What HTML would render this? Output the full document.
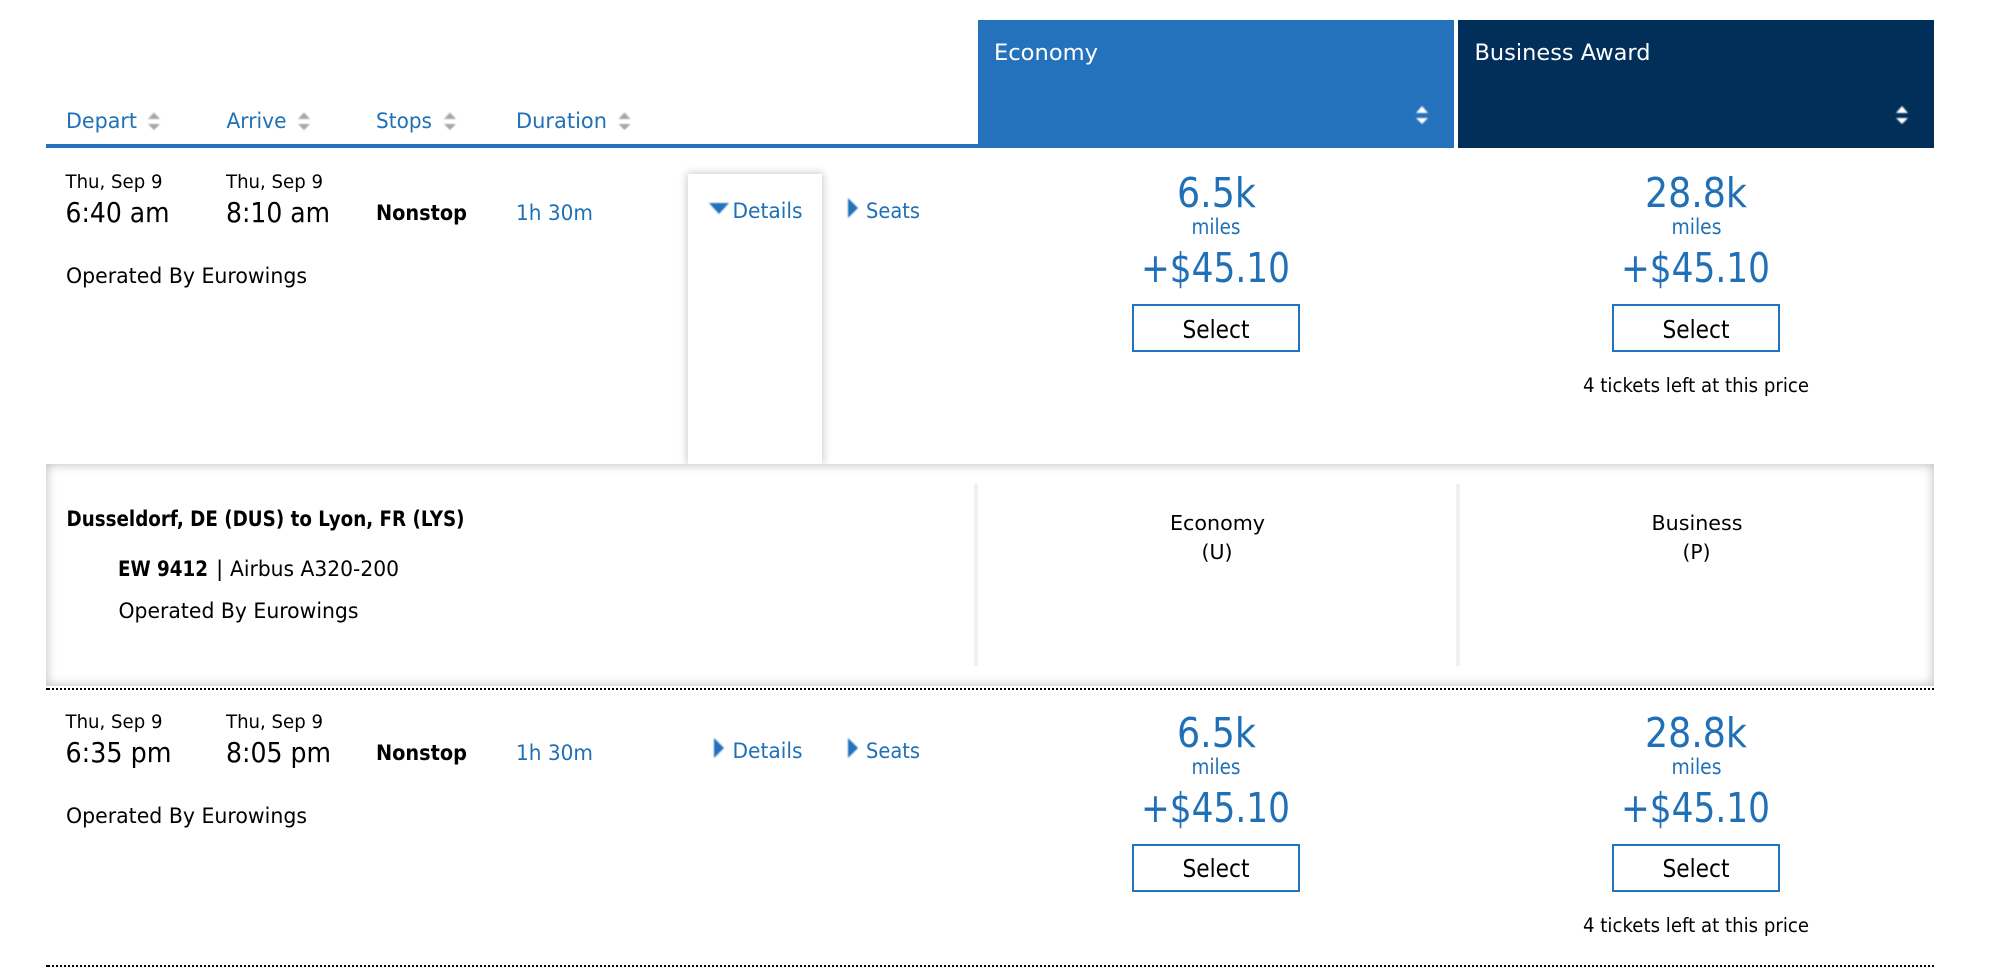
<!DOCTYPE html>
<html lang="en">
<head>
<meta charset="utf-8">
<title>Flight results</title>
<style>
html,body{margin:0;padding:0;background:#fff;width:1998px;height:968px;overflow:hidden}
#a{position:absolute;left:0;top:0;width:1998px;height:968px}
.box{position:absolute}
.panel{left:46px;top:464px;width:1888px;height:222px;box-shadow:inset 0 0 11px 0 #b8b8b8;background:#fff}
.tab{left:688px;top:174px;width:134px;height:290px;background:#fff;box-shadow:0 0 8px 1px #cacaca}
svg{position:absolute;left:0;top:0}
text{font-family:"DejaVu Sans","Liberation Sans",sans-serif}
.b{fill:#2070b8}
.k{fill:#000}
.w{fill:#fff}
.bd{font-weight:bold}
</style>
</head>
<body>
<div id="a">
<div class="box tab"></div>
<div class="box panel"></div>
<svg width="1998" height="968" viewBox="0 0 1998 968" xmlns="http://www.w3.org/2000/svg">
<defs>
<filter id="s" x="-20%" y="-20%" width="140%" height="140%"><feGaussianBlur stdDeviation="0.7"/></filter>
</defs>

<!-- header -->
<rect x="46" y="144" width="932" height="4" fill="#2372bd"/>
<rect x="978" y="20" width="476" height="128" fill="#2372bb"/>
<rect x="1458" y="20" width="476" height="128" fill="#012f5a"/>

<text class="b" font-size="21.500" x="66" y="128" textLength="71" lengthAdjust="spacingAndGlyphs">Depart</text>
<text class="b" font-size="21.500" x="226.500" y="128" textLength="60" lengthAdjust="spacingAndGlyphs">Arrive</text>
<text class="b" font-size="21.500" x="376" y="128" textLength="56" lengthAdjust="spacingAndGlyphs">Stops</text>
<text class="b" font-size="21.500" x="516" y="128" textLength="91" lengthAdjust="spacingAndGlyphs">Duration</text>

<g fill="#a6a6a6" filter="url(#s)">
<path d="M154 112.500L160 119H148Z M148 124H160L154 130Z"/>
<path d="M304 112.500L310 119H298Z M298 124H310L304 130Z"/>
<path d="M450 112.500L456 119H444Z M444 124H456L450 130Z"/>
<path d="M624.500 112.500L630.500 119H618.500Z M618.500 124H630.500L624.500 130Z"/>
</g>

<text class="w" font-size="22" x="994" y="60" textLength="104" lengthAdjust="spacingAndGlyphs">Economy</text>
<text class="w" font-size="22" x="1474.500" y="60" textLength="176" lengthAdjust="spacingAndGlyphs">Business Award</text>
<g fill="#fff" filter="url(#s)">
<path d="M1422 106L1428 113H1416Z M1416 118H1428L1422 124Z"/>
<path d="M1902 106L1908 113H1896Z M1896 118H1908L1902 124Z"/>
</g>

<!-- row 1 -->
<text class="k" font-size="19" x="65.500" y="188" textLength="97" lengthAdjust="spacingAndGlyphs">Thu, Sep 9</text>
<text class="k" font-size="19" x="226" y="188" textLength="97" lengthAdjust="spacingAndGlyphs">Thu, Sep 9</text>
<text class="k" font-size="27.500" x="65.500" y="222" textLength="104" lengthAdjust="spacingAndGlyphs">6:40 am</text>
<text class="k" font-size="27.500" x="226" y="222" textLength="104" lengthAdjust="spacingAndGlyphs">8:10 am</text>
<text class="k bd" font-size="21.500" x="376" y="220" textLength="91" lengthAdjust="spacingAndGlyphs">Nonstop</text>
<text class="b" font-size="21.500" x="516" y="220" textLength="77" lengthAdjust="spacingAndGlyphs">1h 30m</text>
<text class="k" font-size="21.500" x="66" y="283" textLength="241" lengthAdjust="spacingAndGlyphs">Operated By Eurowings</text>

<path d="M709 203H729L719 214Z" fill="#2372bd" filter="url(#s)"/>
<text class="b" font-size="21.500" x="732.500" y="218" textLength="70" lengthAdjust="spacingAndGlyphs">Details</text>
<path d="M848 198L858 208L848 218Z" fill="#2372bd" filter="url(#s)"/>
<text class="b" font-size="21.500" x="866" y="218" textLength="54" lengthAdjust="spacingAndGlyphs">Seats</text>

<text class="b" font-size="41" x="1177" y="207" textLength="79" lengthAdjust="spacingAndGlyphs">6.5k</text>
<text class="b" font-size="41" x="1645" y="207" textLength="102" lengthAdjust="spacingAndGlyphs">28.8k</text>
<text class="b" font-size="21" x="1191.500" y="234" textLength="49" lengthAdjust="spacingAndGlyphs">miles</text>
<text class="b" font-size="21" x="1671.500" y="234" textLength="50" lengthAdjust="spacingAndGlyphs">miles</text>
<text class="b" font-size="41" x="1141" y="282" textLength="149" lengthAdjust="spacingAndGlyphs">+$45.10</text>
<text class="b" font-size="41" x="1621" y="282" textLength="149" lengthAdjust="spacingAndGlyphs">+$45.10</text>

<rect x="1133" y="305" width="166" height="46" fill="#fff" stroke="#2372bd" stroke-width="2"/>
<rect x="1613" y="305" width="166" height="46" fill="#fff" stroke="#2372bd" stroke-width="2"/>
<text class="k" font-size="24.500" x="1182.500" y="338" textLength="67" lengthAdjust="spacingAndGlyphs">Select</text>
<text class="k" font-size="24.500" x="1662.500" y="338" textLength="67" lengthAdjust="spacingAndGlyphs">Select</text>
<text class="k" font-size="19.500" x="1583" y="392" textLength="226" lengthAdjust="spacingAndGlyphs">4 tickets left at this price</text>

<!-- detail panel -->
<rect x="974" y="484" width="4" height="182" fill="#f0f0f0"/>
<rect x="1456" y="484" width="4" height="182" fill="#f0f0f0"/>
<text class="k bd" font-size="21.500" x="66.500" y="526" textLength="398" lengthAdjust="spacingAndGlyphs">Dusseldorf, DE (DUS) to Lyon, FR (LYS)</text>
<text class="k bd" font-size="21.500" x="118" y="576" textLength="90" lengthAdjust="spacingAndGlyphs">EW 9412</text>
<text class="k" font-size="21.500" x="216" y="576">|</text>
<text class="k" font-size="21.500" x="230" y="576" textLength="169" lengthAdjust="spacingAndGlyphs">Airbus A320-200</text>
<text class="k" font-size="21.500" x="118.500" y="618" textLength="240" lengthAdjust="spacingAndGlyphs">Operated By Eurowings</text>
<text class="k" font-size="20.500" x="1170" y="530" textLength="95" lengthAdjust="spacingAndGlyphs">Economy</text>
<text class="k" font-size="20.500" x="1201.500" y="559" textLength="31" lengthAdjust="spacingAndGlyphs">(U)</text>
<text class="k" font-size="20.500" x="1651.500" y="530" textLength="91" lengthAdjust="spacingAndGlyphs">Business</text>
<text class="k" font-size="20.500" x="1682.500" y="559" textLength="28" lengthAdjust="spacingAndGlyphs">(P)</text>

<rect x="46" y="688" width="2" height="2" fill="#000"/>
<line x1="48" y1="689" x2="1934" y2="689" stroke="#000" stroke-width="2" stroke-dasharray="2 2"/>

<!-- row 2 -->
<text class="k" font-size="19" x="65.500" y="728" textLength="97" lengthAdjust="spacingAndGlyphs">Thu, Sep 9</text>
<text class="k" font-size="19" x="226" y="728" textLength="97" lengthAdjust="spacingAndGlyphs">Thu, Sep 9</text>
<text class="k" font-size="27.500" x="65.500" y="762" textLength="106" lengthAdjust="spacingAndGlyphs">6:35 pm</text>
<text class="k" font-size="27.500" x="226" y="762" textLength="105" lengthAdjust="spacingAndGlyphs">8:05 pm</text>
<text class="k bd" font-size="21.500" x="376" y="760" textLength="91" lengthAdjust="spacingAndGlyphs">Nonstop</text>
<text class="b" font-size="21.500" x="516" y="760" textLength="77" lengthAdjust="spacingAndGlyphs">1h 30m</text>
<text class="k" font-size="21.500" x="66" y="823" textLength="241" lengthAdjust="spacingAndGlyphs">Operated By Eurowings</text>

<path d="M714 738L724 748L714 758Z" fill="#2372bd" filter="url(#s)"/>
<text class="b" font-size="21.500" x="732.500" y="758" textLength="70" lengthAdjust="spacingAndGlyphs">Details</text>
<path d="M848 738L858 748L848 758Z" fill="#2372bd" filter="url(#s)"/>
<text class="b" font-size="21.500" x="866" y="758" textLength="54" lengthAdjust="spacingAndGlyphs">Seats</text>

<text class="b" font-size="41" x="1177" y="747" textLength="79" lengthAdjust="spacingAndGlyphs">6.5k</text>
<text class="b" font-size="41" x="1645" y="747" textLength="102" lengthAdjust="spacingAndGlyphs">28.8k</text>
<text class="b" font-size="21" x="1191.500" y="774" textLength="49" lengthAdjust="spacingAndGlyphs">miles</text>
<text class="b" font-size="21" x="1671.500" y="774" textLength="50" lengthAdjust="spacingAndGlyphs">miles</text>
<text class="b" font-size="41" x="1141" y="822" textLength="149" lengthAdjust="spacingAndGlyphs">+$45.10</text>
<text class="b" font-size="41" x="1621" y="822" textLength="149" lengthAdjust="spacingAndGlyphs">+$45.10</text>

<rect x="1133" y="845" width="166" height="46" fill="#fff" stroke="#2372bd" stroke-width="2"/>
<rect x="1613" y="845" width="166" height="46" fill="#fff" stroke="#2372bd" stroke-width="2"/>
<text class="k" font-size="24.500" x="1182.500" y="877" textLength="67" lengthAdjust="spacingAndGlyphs">Select</text>
<text class="k" font-size="24.500" x="1662.500" y="877" textLength="67" lengthAdjust="spacingAndGlyphs">Select</text>
<text class="k" font-size="19.500" x="1583" y="932" textLength="226" lengthAdjust="spacingAndGlyphs">4 tickets left at this price</text>

<rect x="46" y="965" width="2" height="2" fill="#000"/>
<line x1="48" y1="966" x2="1934" y2="966" stroke="#000" stroke-width="2" stroke-dasharray="2 2"/>
</svg>
</div>
</body>
</html>
